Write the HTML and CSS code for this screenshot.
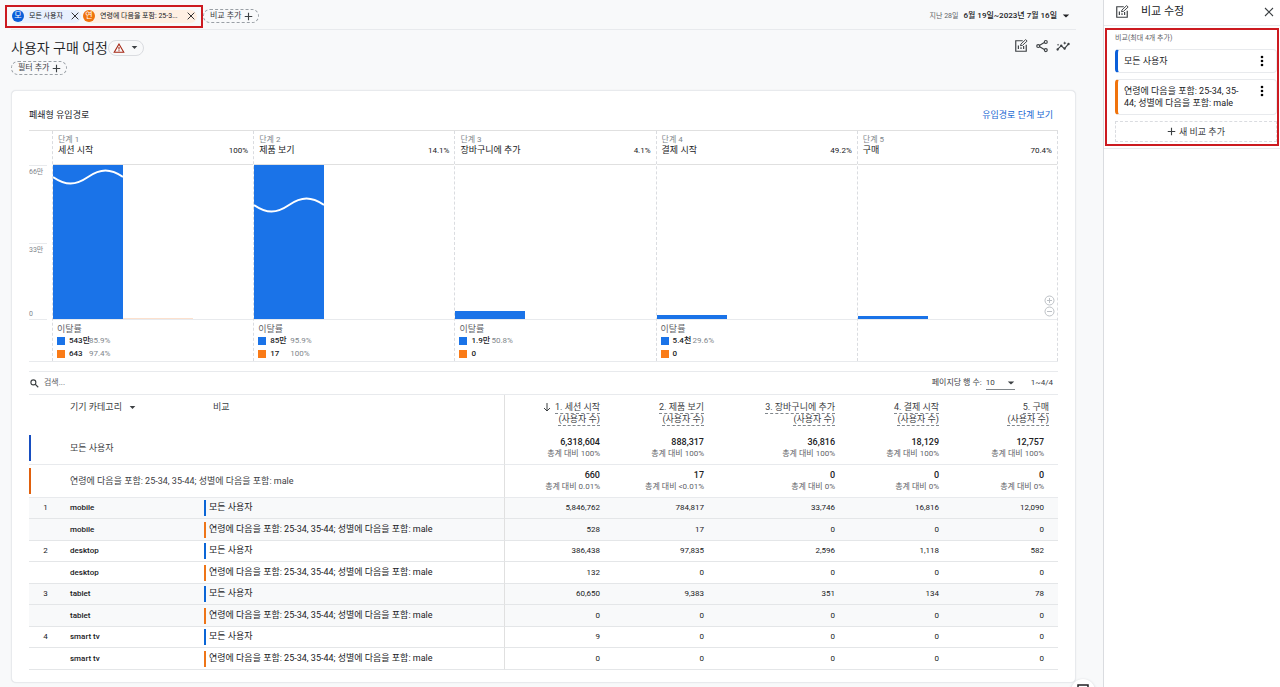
FILE: index.html
```html
<!DOCTYPE html>
<html lang="ko">
<head>
    <title>사용자 구매 여정</title>
    <meta charset="utf-8">
    <link rel="stylesheet" href="styles.css">
</head>
<body>
    <svg width="0" height="0" class="defs">
        <symbol id="i-close" viewBox="0 0 12 12"><path d="M2 2l8 8M10 2l-8 8" fill="none" stroke="currentColor" stroke-width="1.1"/></symbol>
        <symbol id="i-plus" viewBox="0 0 12 12"><path d="M6 1v10M1 6h10" fill="none" stroke="currentColor" stroke-width="1.5"/></symbol>
        <symbol id="i-down" viewBox="0 0 10 10"><path d="M1 3h8L5 7z" fill="currentColor"/></symbol>
        <symbol id="i-more" viewBox="0 0 4 12"><circle cx="2" cy="2" r="1.3"/><circle cx="2" cy="6" r="1.3"/><circle cx="2" cy="10" r="1.3"/></symbol>
        <symbol id="i-edit" viewBox="0 0 24 24">
            <path d="M15 3H3v18h18V10" fill="none" stroke="currentColor" stroke-width="2"/>
            <path d="M7.500 11v6M12 14v3M16.500 12v5" fill="none" stroke="currentColor" stroke-width="2"/>
            <path d="M11 11.500l1-3L20 1l2.500 2.500-8 7.500z" fill="none" stroke="currentColor" stroke-width="1.600"/>
        </symbol>
    </svg>

    <main class="report">
        <header class="topbar">
            <div class="chips">
                <div class="chip chip-blue">
                    <span class="avatar">모</span>
                    <span>모든 사용자</span>
                    <button class="icon-btn" aria-label="삭제"><svg width="10" height="10"><use href="#i-close"/></svg></button>
                </div>
                <div class="chip chip-orange">
                    <span class="avatar">연</span>
                    <span>연령에 다음을 포함: 25-3...</span>
                    <button class="icon-btn" aria-label="삭제"><svg width="10" height="10"><use href="#i-close"/></svg></button>
                </div>
            </div>
            <button class="pill">비교 추가 <svg width="9" height="9"><use href="#i-plus"/></svg></button>
            <button class="date">
                <small>지난 28일</small>
                <span>6월 19일~2023년 7월 16일</span>
                <svg width="8" height="8"><use href="#i-down"/></svg>
            </button>
        </header>

        <div class="title-row">
            <h1>사용자 구매 여정</h1>
            <button class="warning" aria-label="경고">
                <svg width="12" height="12" viewBox="0 0 24 24"><path d="M12 4L2.500 20.500h19z" fill="none" stroke="#a52714" stroke-width="2.200"/><path d="M12 10v5M12 16.500v2" stroke="#a52714" stroke-width="2.200"/></svg>
                <svg width="7" height="7"><use href="#i-down"/></svg>
            </button>
            <div class="tools">
                <button class="icon-btn" aria-label="비교 수정"><svg width="14" height="14"><use href="#i-edit"/></svg></button>
                <button class="icon-btn" aria-label="공유">
                    <svg width="14" height="14" viewBox="0 0 24 24" fill="none" stroke="currentColor" stroke-width="2"><circle cx="18.500" cy="5" r="2.500"/><circle cx="5.500" cy="12" r="2.500"/><circle cx="18.500" cy="19" r="2.500"/><path d="M8 10.800l8-4.600M8 13.200l8 4.600"/></svg>
                </button>
                <button class="icon-btn" aria-label="통계">
                    <svg width="14" height="14" viewBox="0 0 24 24"><path d="M3 17.500l6-6 5.500 5L21.500 8.500" fill="none" stroke="currentColor" stroke-width="2"/><g fill="currentColor"><circle cx="2.800" cy="18" r="2"/><circle cx="9" cy="11.500" r="2"/><circle cx="14.800" cy="16.500" r="2"/><circle cx="21.500" cy="8.500" r="2"/><path d="M15 4l.8 2L18 7l-2.200 1-.8 2-.8-2L12 7l2.200-1zM3.500 8l.6 1.400L5.500 10l-1.400.6-.6 1.400-.6-1.400L1.500 10l1.400-.6z"/></g></svg>
                </button>
            </div>
        </div>
        <button class="pill filter">필터 추가 <svg width="9" height="9"><use href="#i-plus"/></svg></button>

        <section class="card">
            <div class="card-head">
                <h2>폐쇄형 유입경로</h2>
                <a href="#steps">유입경로 단계 보기</a>
            </div>

            <div class="funnel" id="steps">
                <div class="axis"><span>66만</span><span>33만</span><span>0</span></div>
                <div class="step">
                    <div class="step-head"><small>단계 1</small><div><span>세션 시작</span><span class="rate">100%</span></div></div>
                    <div class="plot">
                        <div class="bar" style="height: 100%"><svg width="70" height="24"><path d="M0 12C12.700 20.700 22.300 20.700 35 12S57.300 3.300 70 12"/></svg></div>
                        <div class="bar bar-orange" style="height: 1px"></div>
                    </div>
                    <div class="drop">
                        <h3>이탈률</h3>
                        <p><i class="blue"></i><b>543만</b><span>85.9%</span></p>
                        <p><i class="orange"></i><b>643</b><span>97.4%</span></p>
                    </div>
                </div>
                <div class="step">
                    <div class="step-head"><small>단계 2</small><div><span>제품 보기</span><span class="rate">14.1%</span></div></div>
                    <div class="plot">
                        <div class="bar" style="height: 100%"><svg width="70" height="52"><path d="M0 40C12.700 48.700 22.300 48.700 35 40S57.300 31.300 70 40"/></svg></div>
                    </div>
                    <div class="drop">
                        <h3>이탈률</h3>
                        <p><i class="blue"></i><b>85만</b><span>95.9%</span></p>
                        <p><i class="orange"></i><b>17</b><span>100%</span></p>
                    </div>
                </div>
                <div class="step">
                    <div class="step-head"><small>단계 3</small><div><span>장바구니에 추가</span><span class="rate">4.1%</span></div></div>
                    <div class="plot"><div class="bar" style="height: 5.5%"></div></div>
                    <div class="drop">
                        <h3>이탈률</h3>
                        <p><i class="blue"></i><b>1.9만</b><span>50.8%</span></p>
                        <p><i class="orange"></i><b>0</b></p>
                    </div>
                </div>
                <div class="step">
                    <div class="step-head"><small>단계 4</small><div><span>결제 시작</span><span class="rate">49.2%</span></div></div>
                    <div class="plot"><div class="bar" style="height: 2.7%"></div></div>
                    <div class="drop">
                        <h3>이탈률</h3>
                        <p><i class="blue"></i><b>5.4천</b><span>29.6%</span></p>
                        <p><i class="orange"></i><b>0</b></p>
                    </div>
                </div>
                <div class="step">
                    <div class="step-head"><small>단계 5</small><div><span>구매</span><span class="rate">70.4%</span></div></div>
                    <div class="plot">
                        <div class="bar" style="height: 1.9%"></div>
                        <div class="zoom">
                            <button class="icon-btn" aria-label="확대"><svg width="11" height="11" viewBox="0 0 11 11"><circle cx="5.500" cy="5.500" r="4.500"/><path d="M3 5.500h5M5.500 3v5"/></svg></button>
                            <button class="icon-btn" aria-label="축소"><svg width="11" height="11" viewBox="0 0 11 11"><circle cx="5.500" cy="5.500" r="4.500"/><path d="M3 5.500h5"/></svg></button>
                        </div>
                    </div>
                    <div class="drop"></div>
                </div>
            </div>

            <div class="table-bar">
                <label class="search">
                    <svg width="9" height="9" viewBox="0 0 12 12"><circle cx="4.500" cy="4.500" r="3.300"/><path d="M7 7l4 4"/></svg>
                    <input type="text" placeholder="검색..." aria-label="검색">
                </label>
                <label class="rows" for="rows">페이지당 행 수:</label>
                <div class="select">
                    <select id="rows"><option>10</option><option>25</option></select>
                    <svg width="8" height="8"><use href="#i-down"/></svg>
                </div>
                <span class="range">1~4/4</span>
            </div>

            <table>
                <colgroup>
                    <col class="c-num"><col class="c-cat"><col class="c-cmp"><col class="c-val"><col class="c-val"><col class="c-wide"><col class="c-val"><col class="c-last">
                </colgroup>
                <thead>
                    <tr>
                        <th></th>
                        <th class="left">기기 카테고리 <svg width="7" height="7"><use href="#i-down"/></svg></th>
                        <th class="left cmp">비교</th>
                        <th class="first"><svg width="8" height="9" viewBox="0 0 8 9" class="arrow"><path d="M4 0v8M1 5l3 3 3-3"/></svg><span>1. 세션 시작</span><br><span>(사용자 수)</span></th>
                        <th><span>2. 제품 보기</span><br><span>(사용자 수)</span></th>
                        <th><span>3. 장바구니에 추가</span><br><span>(사용자 수)</span></th>
                        <th><span>4. 결제 시작</span><br><span>(사용자 수)</span></th>
                        <th><span>5. 구매</span><br><span>(사용자 수)</span></th>
                    </tr>
                </thead>
                <tbody class="totals">
                    <tr>
                        <td><i class="mark navy"></i></td>
                        <td colspan="2">모든 사용자</td>
                        <td class="first"><b>6,318,604</b><small>총계 대비 100%</small></td>
                        <td><b>888,317</b><small>총계 대비 100%</small></td>
                        <td><b>36,816</b><small>총계 대비 100%</small></td>
                        <td><b>18,129</b><small>총계 대비 100%</small></td>
                        <td><b>12,757</b><small>총계 대비 100%</small></td>
                    </tr>
                    <tr>
                        <td><i class="mark rust"></i></td>
                        <td colspan="2">연령에 다음을 포함: 25-34, 35-44; 성별에 다음을 포함: male</td>
                        <td class="first"><b>660</b><small>총계 대비 0.01%</small></td>
                        <td><b>17</b><small>총계 대비 &lt;0.01%</small></td>
                        <td><b>0</b><small>총계 대비 0%</small></td>
                        <td><b>0</b><small>총계 대비 0%</small></td>
                        <td><b>0</b><small>총계 대비 0%</small></td>
                    </tr>
                </tbody>
                <tbody class="group shaded">
                    <tr><td>1</td><th>mobile</th><td><span class="all">모든 사용자</span></td><td class="first">5,846,762</td><td>784,817</td><td>33,746</td><td>16,816</td><td>12,090</td></tr>
                    <tr><td></td><th>mobile</th><td><span class="seg">연령에 다음을 포함: 25-34, 35-44; 성별에 다음을 포함: male</span></td><td class="first">528</td><td>17</td><td>0</td><td>0</td><td>0</td></tr>
                </tbody>
                <tbody class="group">
                    <tr><td>2</td><th>desktop</th><td><span class="all">모든 사용자</span></td><td class="first">386,438</td><td>97,835</td><td>2,596</td><td>1,118</td><td>582</td></tr>
                    <tr><td></td><th>desktop</th><td><span class="seg">연령에 다음을 포함: 25-34, 35-44; 성별에 다음을 포함: male</span></td><td class="first">132</td><td>0</td><td>0</td><td>0</td><td>0</td></tr>
                </tbody>
                <tbody class="group shaded">
                    <tr><td>3</td><th>tablet</th><td><span class="all">모든 사용자</span></td><td class="first">60,650</td><td>9,383</td><td>351</td><td>134</td><td>78</td></tr>
                    <tr><td></td><th>tablet</th><td><span class="seg">연령에 다음을 포함: 25-34, 35-44; 성별에 다음을 포함: male</span></td><td class="first">0</td><td>0</td><td>0</td><td>0</td><td>0</td></tr>
                </tbody>
                <tbody class="group">
                    <tr><td>4</td><th>smart tv</th><td><span class="all">모든 사용자</span></td><td class="first">9</td><td>0</td><td>0</td><td>0</td><td>0</td></tr>
                    <tr><td></td><th>smart tv</th><td><span class="seg">연령에 다음을 포함: 25-34, 35-44; 성별에 다음을 포함: male</span></td><td class="first">0</td><td>0</td><td>0</td><td>0</td><td>0</td></tr>
                </tbody>
            </table>
        </section>
        <button class="feedback" aria-label="의견"><svg width="12" height="12" viewBox="0 0 12 12"><path d="M1 1h10v8H4l-3 2z" fill="none" stroke="#202124" stroke-width="1.500"/></svg></button>
    </main>

    <aside class="panel">
        <header class="panel-head">
            <svg width="14" height="14"><use href="#i-edit"/></svg>
            <h2>비교 수정</h2>
            <button class="icon-btn" aria-label="닫기"><svg width="12" height="12"><use href="#i-close"/></svg></button>
        </header>
        <div class="panel-body">
            <div class="compare">
                <p class="hint">비교(최대 4개 추가)</p>
                <div class="item item-blue"><span>모든 사용자</span><button class="icon-btn" aria-label="더보기"><svg width="4" height="12"><use href="#i-more"/></svg></button></div>
                <div class="item item-orange"><span>연령에 다음을 포함: 25-34, 35-44; 성별에 다음을 포함: male</span><button class="icon-btn" aria-label="더보기"><svg width="4" height="12"><use href="#i-more"/></svg></button></div>
                <button class="add"><svg width="9" height="9"><use href="#i-plus"/></svg> 새 비교 추가</button>
            </div>
        </div>
    </aside>
</body>
</html>
```
FILE: styles.css
```css
* {
    box-sizing: border-box;
}

body {
    margin: 0;
    display: flex;
    height: 100vh;
    overflow: hidden;
    background-color: #f8f9fa;
    color: #3c4043;
    font-family: Roboto, 'Noto Sans CJK KR', sans-serif;
    font-size: 9px;
    line-height: 12px;
}

h1, h2, h3, p {
    margin: 0;
    font-weight: 400;
}

button, input, select {
    font: inherit;
    color: inherit;
    background: none;
    border: 0;
    padding: 0;
    margin: 0;
}

button {
    cursor: pointer;
}

svg {
    flex: none;
}

small {
    font-size: 8px;
}

.defs {
    position: absolute;
}

.icon-btn {
    display: flex;
    align-items: center;
}

/* report */

.report {
    position: relative;
    flex: 1;
    min-width: 0;
    padding: 0 27px 0 11px;
}

.topbar {
    display: flex;
    align-items: center;
    height: 30px;
    padding-top: 3px;
    border-bottom: 1px solid #e8eaed;
}

.chips {
    display: flex;
    align-items: center;
    gap: 2px;
    height: 23px;
    margin-left: -6px;
    padding: 0 4px 0 5px;
    border: 2px solid #cc1a20;
    font-size: 7px;
}

.chip {
    display: flex;
    align-items: center;
    gap: 5px;
    height: 13px;
    padding-right: 1px;
    border-radius: 7px;
    color: #202124;
    white-space: nowrap;
}

.chip .icon-btn {
    margin-left: auto;
}

.chip-blue {
    width: 69px;
    background-color: #e8f0fe;
}

.chip-orange {
    width: 114px;
    background-color: #feefe3;
}

.avatar {
    width: 12px;
    height: 12px;
    border-radius: 50%;
    background-color: #0b5fd9;
    color: white;
    font-size: 8px;
    text-align: center;
}

.chip-orange .avatar {
    background-color: #f0730c;
}

.pill {
    display: flex;
    align-items: center;
    gap: 3px;
    height: 14px;
    padding: 0 5px 0 6px;
    border: 1px dashed #9aa0a6;
    border-radius: 7px;
    font-size: 8px;
    white-space: nowrap;
}

.date {
    display: flex;
    align-items: center;
    gap: 5px;
    margin-left: auto;
    padding-right: 6px;
    font-size: 8px;
    font-weight: 500;
    color: #202124;
}

.date small {
    font-size: 7px;
    font-weight: 400;
    color: #5f6368;
}

.title-row {
    display: flex;
    align-items: center;
    height: 31px;
    padding-top: 4px;
}

h1 {
    font-size: 14px;
    line-height: 20px;
    font-weight: 350;
    color: #202124;
}

.warning {
    display: flex;
    align-items: center;
    gap: 6px;
    height: 16px;
    padding: 0 5px 0 4px;
    border: 1px solid #dadce0;
    border-radius: 8px;
}

.tools {
    display: flex;
    gap: 7px;
    margin-left: auto;
    padding: 0 6px 4px 0;
}

.card {
    margin-top: 15px;
    padding: 0 17px 12px;
    background-color: white;
    border: 1px solid #e8eaed;
    border-radius: 5px;
    box-shadow: 0 0 1px #dadce0;
}

.card-head {
    display: flex;
    justify-content: space-between;
    align-items: center;
    height: 39px;
    padding: 8px 5px 0 0;
}

.card-head h2 {
    font-size: 9px;
    color: #202124;
}

a {
    color: #1967d2;
    text-decoration: none;
}

/* funnel */

.funnel {
    display: grid;
    grid-template-columns: 23px repeat(5, 1fr);
    border-top: 1px solid #e0e0e0;
    border-bottom: 1px solid #e8eaed;
}

.axis {
    display: flex;
    flex-direction: column;
    width: 18px;
    height: 189px;
    padding-top: 34px;
    font-size: 7px;
    color: #80868b;
}

.axis span {
    height: 78px;
    border-top: 1px solid #e8eaed;
}

.axis span:last-child {
    height: 12px;
    margin-top: -12px;
    border-top: 0;
    border-bottom: 1px solid #e8eaed;
}

.step {
    border-left: 1px dashed #dadce0;
}

.step:last-child {
    border-right: 1px dashed #dadce0;
}

.step-head {
    height: 34px;
    padding: 3px 5px 0 5px;
    line-height: 11px;
    color: #202124;
    border-bottom: 1px solid #e0e0e0;
}

.step-head small {
    display: block;
    color: #80868b;
}

.step-head div {
    display: flex;
    justify-content: space-between;
}

.rate {
    font-size: 8px;
}

.plot {
    position: relative;
    display: flex;
    align-items: flex-end;
    height: 155px;
    border-bottom: 1px solid #e8eaed;
}

.bar {
    width: 70px;
    background-color: #1a73e8;
}

.bar-orange {
    background-color: #fce0cd;
}

.bar svg {
    display: block;
    fill: none;
    stroke: white;
    stroke-width: 2;
}

.zoom {
    position: absolute;
    right: 2px;
    bottom: 2px;
}

.zoom svg {
    fill: none;
    stroke: #bdc1c6;
}

.drop {
    height: 41px;
    padding: 4px 0 0 4px;
}

.drop h3 {
    font-size: 9px;
    line-height: 10px;
    color: #5f6368;
}

.drop p {
    display: grid;
    grid-template-columns: 12px 20px auto;
    align-items: center;
    height: 13px;
    font-size: 8px;
    color: #80868b;
    white-space: nowrap;
}

.drop i {
    width: 8px;
    height: 8px;
}

.drop b {
    font-weight: 500;
    color: #202124;
}

.blue {
    background-color: #1a73e8;
}

.orange {
    background-color: #fa7b17;
}

/* table */

.table-bar {
    display: flex;
    align-items: center;
    height: 24px;
    margin-top: 9px;
    border-top: 1px solid #e8eaed;
    border-bottom: 1px solid #e8eaed;
    font-size: 8px;
}

.search {
    display: flex;
    align-items: center;
    gap: 5px;
    flex: 1;
    padding-left: 1px;
}

.search svg {
    fill: none;
    stroke: #3c4043;
    stroke-width: 1.5;
}

.search input::placeholder {
    color: #5f6368;
}

.select {
    display: flex;
    align-items: center;
    width: 29px;
    margin: 0 16px 0 4px;
    border-bottom: 1px solid #80868b;
}

select {
    appearance: none;
    width: 21px;
    height: 13px;
}

.range {
    padding-right: 5px;
}

table {
    width: 100%;
    table-layout: fixed;
    border-collapse: separate;
    border-spacing: 0;
    text-align: right;
}

.c-num { width: 41px; }
.c-cat { width: 134px; }
.c-cmp { width: 300px; }
.c-val { width: 104px; }
.c-wide { width: 131px; }
.c-last { width: 111px; }

th, td {
    padding: 0 8px 0 0;
    font-weight: 400;
    white-space: nowrap;
}

.first {
    border-left: 1px solid #e0e0e0;
}

thead th {
    height: 37px;
    padding-top: 7px;
    line-height: 11px;
    vertical-align: top;
}

thead th:last-child {
    padding-right: 9px;
}

thead .left {
    text-align: left;
}

thead .left svg {
    margin-left: 5px;
    vertical-align: middle;
}

thead .cmp {
    padding-left: 9px;
}

thead span {
    display: inline-block;
    height: 12px;
    border-bottom: 1px dashed #80868b;
    vertical-align: top;
}

.arrow {
    margin: 1px 4px 0 0;
    vertical-align: top;
    fill: none;
    stroke: #3c4043;
}

tbody td:last-child {
    padding-right: 14px;
}

.totals td {
    height: 33px;
    border-bottom: 1px solid #e8eaed;
}

.totals td:nth-child(2) {
    text-align: left;
}

.totals b {
    display: block;
    font-weight: 500;
    color: #202124;
}

.totals small {
    display: block;
    color: #5f6368;
}

.mark {
    display: block;
    width: 2px;
    height: 26px;
}

.navy {
    background-color: #174ec0;
}

.rust {
    background-color: #e0600c;
}

.group {
    color: #202124;
}

.shaded {
    background-color: #f8f9fa;
}

.group th, .group td {
    height: 21px;
    border-bottom: 1px solid #e4e6e8;
    font-size: 8px;
}

.group tr:last-child td {
    height: 22px;
}

.group th {
    font-weight: 500;
    text-align: left;
}

.group td:first-child {
    text-align: center;
}

.group td:nth-child(3) {
    text-align: left;
    font-size: 9px;
}

.all, .seg {
    display: block;
    height: 16px;
    padding-left: 3px;
    line-height: 14px;
    border-left: 2px solid #0b66d6;
}

.seg {
    border-color: #ee7518;
}

.feedback {
    position: absolute;
    right: 8px;
    bottom: -16px;
    display: flex;
    justify-content: center;
    width: 24px;
    height: 24px;
    padding-top: 5px;
    background-color: white;
    border-radius: 50%;
    box-shadow: 0 1px 3px #bdc1c6;
}

/* side panel */

.panel {
    width: 177px;
    background-color: white;
    border-left: 1px solid #dadce0;
}

.panel-head {
    display: flex;
    align-items: center;
    gap: 12px;
    height: 26px;
    padding: 0 5px 2px 11px;
    border-bottom: 1px solid #e8eaed;
}

.panel-head h2 {
    flex: 1;
    font-size: 11px;
    color: #202124;
}

.panel-body {
    padding: 2px 1px;
    border-bottom: 1px solid #e8eaed;
}

.compare {
    display: flex;
    flex-direction: column;
    gap: 6px;
    padding: 3px 0 2px 8px;
    border: 2px solid #cc1a20;
}

.hint {
    font-size: 7px;
    line-height: 10px;
    color: #5f6368;
}

.item {
    display: flex;
    justify-content: space-between;
    align-items: flex-start;
    padding: 5px 12px 5px 6px;
    border: 1px solid #e8eaed;
    border-left: 3px solid #0b5fd9;
    border-radius: 4px;
    color: #202124;
}

.item-orange {
    border-left-color: #f0730c;
}

.item span {
    max-width: 118px;
}

.add {
    display: flex;
    justify-content: center;
    align-items: center;
    gap: 3px;
    height: 21px;
    border: 1px dashed #dadce0;
}
```
